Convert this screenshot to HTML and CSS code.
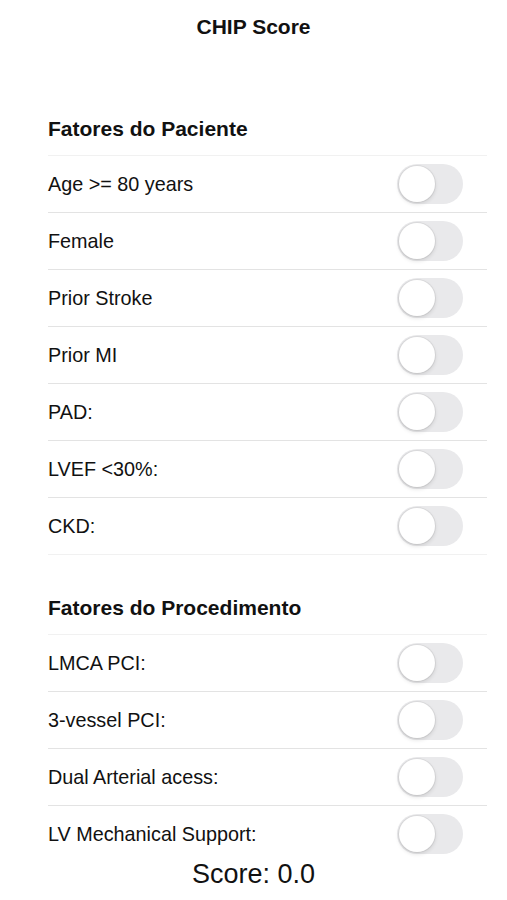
FILE: index.html
```html
<!DOCTYPE html>
<html lang="pt">
<head>
  <meta charset="UTF-8">
  <meta name="viewport" content="width=device-width, initial-scale=1.0">
  <link rel="stylesheet" href="styles.css">
  <title>CHIP Score</title>
</head>
<body>

<div class="title">CHIP Score</div>

<div class="group first">
  <div class="group-title">Fatores do Paciente</div>
  <ul class="rows">
    <li class="row"><span>Age &gt;= 80 years</span><label class="switch"><input type="checkbox"><span class="knob"></span></label></li>
    <li class="row"><span>Female</span><label class="switch"><input type="checkbox"><span class="knob"></span></label></li>
    <li class="row"><span>Prior Stroke</span><label class="switch"><input type="checkbox"><span class="knob"></span></label></li>
    <li class="row"><span>Prior MI</span><label class="switch"><input type="checkbox"><span class="knob"></span></label></li>
    <li class="row"><span>PAD:</span><label class="switch"><input type="checkbox"><span class="knob"></span></label></li>
    <li class="row"><span>LVEF &lt;30%:</span><label class="switch"><input type="checkbox"><span class="knob"></span></label></li>
    <li class="row"><span>CKD:</span><label class="switch"><input type="checkbox"><span class="knob"></span></label></li>
  </ul>
</div>

<div class="group second">
  <div class="group-title">Fatores do Procedimento</div>
  <ul class="rows">
    <li class="row"><span>LMCA PCI:</span><label class="switch"><input type="checkbox"><span class="knob"></span></label></li>
    <li class="row"><span>3-vessel PCI:</span><label class="switch"><input type="checkbox"><span class="knob"></span></label></li>
    <li class="row"><span>Dual Arterial acess:</span><label class="switch"><input type="checkbox"><span class="knob"></span></label></li>
    <li class="row"><span>LV Mechanical Support:</span><label class="switch"><input type="checkbox"><span class="knob"></span></label></li>
  </ul>
</div>

<div class="score">Score: 0.0</div>

</body>
</html>
```

FILE: styles.css
```css
body {
  font-family: "Liberation Sans", Arial, sans-serif;
  color: #111;
  background: #fff;
  margin: 0;
}

.title {
  padding-top: 14px;
  font-size: 21px;
  line-height: 26px;
  font-weight: bold;
  text-align: center;
}

.group {
  margin: 0 20px 0 48px;
}

.group.first {
  margin-top: 76px;
}

.group.second {
  margin-top: 40px;
}

.group-title {
  font-size: 21px;
  line-height: 26px;
  font-weight: bold;
  margin-bottom: 13px;
}

.rows {
  list-style: none;
  margin: 0;
  padding: 0;
  border-top: 1px solid #f1f1f1;
}

.row {
  display: flex;
  justify-content: space-between;
  align-items: center;
  height: 56px;
  padding-right: 24px;
  font-size: 19.8px;
  border-bottom: 1px solid #e3e3e3;
}

.first .row:last-child {
  border-bottom-color: #f1f1f1;
}

.second .row:last-child {
  border-bottom: none;
}

.switch {
  display: flex;
  align-items: center;
  box-sizing: border-box;
  width: 66px;
  height: 40px;
  padding: 2px;
  border-radius: 20px;
  background-color: #e9e9eb;
  cursor: pointer;
}

.switch input {
  display: none;
}

.knob {
  width: 36px;
  height: 36px;
  border-radius: 50%;
  background-color: #fff;
  box-shadow: 0 2px 4px rgba(0, 0, 0, 0.12), 0 0 0 1px rgba(0, 0, 0, 0.06);
  transition: transform 0.2s;
}

.switch:has(input:checked) {
  background-color: #34c759;
}

.switch input:checked + .knob {
  transform: translateX(26px);
}

.score {
  font-size: 27px;
  line-height: 24px;
  text-align: center;
}
```
